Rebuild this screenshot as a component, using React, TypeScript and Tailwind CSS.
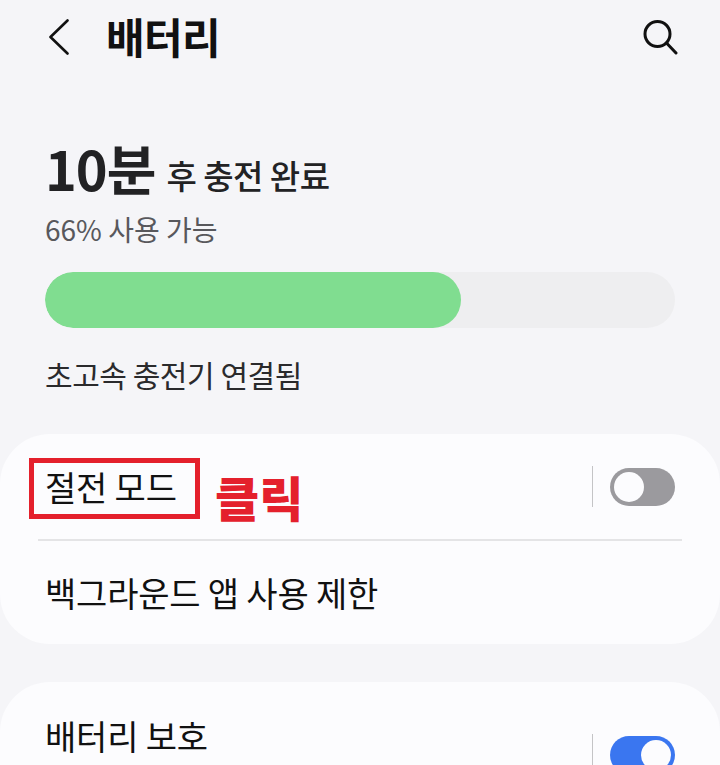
import React from 'react';

const Toggle = ({ on }: { on: boolean }) => (
  <div className="flex items-center">
    <div className="w-px h-[41px] bg-[#c4c4c6] mr-[17px]" />
    <div
      className={`w-[65px] h-[38px] rounded-full p-[4px] flex ${
        on ? 'bg-[#3a76f0] justify-end' : 'bg-[#9b9a9e] justify-start'
      }`}
    >
      <div className="w-[30px] h-[30px] rounded-full bg-[#fcfcfe]" />
    </div>
  </div>
);

const App: React.FC = () => {
  return (
    <div
      className="relative w-[720px] h-[765px] overflow-hidden bg-[#f5f5f8] text-[#1c1c1e]"
      style={{ fontFamily: '"Noto Sans CJK KR", "Noto Sans", sans-serif' }}
    >
      {/* Header */}
      <div className="h-[74px] flex items-center pl-[48px] pr-[42px]">
        <svg width="22" height="36" viewBox="0 0 22 36" fill="none" className="shrink-0">
          <path d="M19.5 1.5 L2.5 18 L19.5 34.5" stroke="#111" strokeWidth="2.6" strokeLinecap="round" strokeLinejoin="round" />
        </svg>
        <h1 className="ml-[36px] -mt-[3px] text-[42px] leading-none font-bold tracking-[-0.7px] text-[#111]">배터리</h1>
        <svg width="36" height="36" viewBox="0 0 36 36" fill="none" className="ml-auto">
          <circle cx="15.5" cy="15" r="12.5" stroke="#111" strokeWidth="3" />
          <path d="M24.5 24 L34 34" stroke="#111" strokeWidth="3" strokeLinecap="round" />
        </svg>
      </div>

      {/* Charging status */}
      <div className="px-[45px] pt-[62px]">
        <div className="flex items-baseline h-[64px]">
          <span className="text-[54px] leading-[64px] font-bold tracking-[-1px] text-[#222224]">10분</span>
          <span className="ml-[11px] -translate-y-[2px] text-[33px] font-medium text-[#222224] tracking-[-0.5px]">후 충전 완료</span>
        </div>
        <p className="mt-[11px] h-[36px] text-[28px] leading-[36px] text-[#58585c]">66% 사용 가능</p>
        <div className="mt-[25px] h-[56px] rounded-full bg-[#eeeef0] overflow-hidden">
          <div className="h-full w-[416px] rounded-full bg-[#80dd90]" />
        </div>
        <p className="mt-[28px] h-[36px] text-[30px] leading-[36px] text-[#2a2a2c] tracking-[-0.45px]">초고속 충전기 연결됨</p>
      </div>

      {/* Power saving card */}
      <div className="mt-[42px] h-[210px] rounded-[50px] bg-[#fcfcfe]">
        <div className="h-[105px] flex items-center justify-between pl-[45px] pr-[45px]">
          <span className="text-[34px] text-[#111] tracking-[-0.2px]">절전 모드</span>
          <Toggle on={false} />
        </div>
        <div className="mx-[38px] h-[2px] bg-[#e4e4e6]" />
        <div className="h-[103px] flex items-center pl-[45px]">
          <span className="text-[34px] text-[#111] tracking-[-0.2px]">백그라운드 앱 사용 제한</span>
        </div>
      </div>

      {/* Battery protection card */}
      <div className="mt-[38px] h-[140px] rounded-[50px] bg-[#fcfcfe]">
        <div className="h-[106px] flex items-center justify-between pl-[45px] pr-[45px]">
          <span className="text-[34px] text-[#111] tracking-[-0.2px]">배터리 보호</span>
          <div className="mt-[39px]">
            <Toggle on />
          </div>
        </div>
      </div>

      {/* Annotation */}
      <div className="absolute left-[29px] top-[458px] w-[171px] h-[61px] border-[5px] border-[#e4202c]" />
      <span className="absolute left-[215px] top-[464px] text-[48px] leading-[64px] font-black text-[#e4202c]">클릭</span>
    </div>
  );
};

export default App;
